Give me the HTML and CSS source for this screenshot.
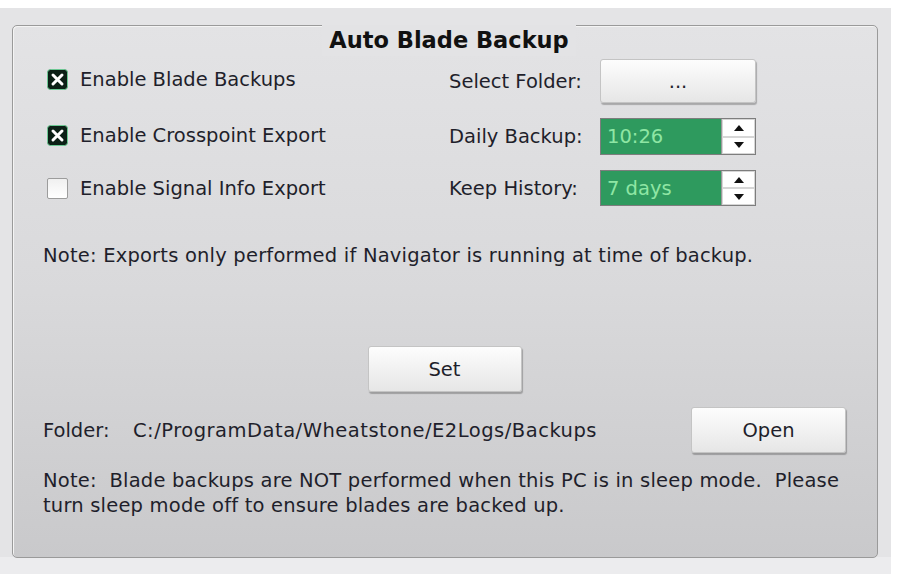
FILE: index.html
```html
<!DOCTYPE html>
<html lang="en">
<head>
    <meta charset="UTF-8">
    <title>Auto Blade Backup</title>
    <link rel="stylesheet" href="styles.css">
</head>
<body>
    <div class="frame">
        <div class="panel">
            <h2 class="panel-title">Auto Blade Backup</h2>

            <div class="options">
                <label class="check">
                    <span class="box checked">
                        <svg width="21" height="21" viewBox="0 0 21 21"><rect x="0.5" y="0.5" width="20" height="20" rx="3" fill="#0c2016" stroke="#6cc893"/><path d="M6 6 L15 15 M15 6 L6 15" stroke="#fff" stroke-width="3" stroke-linecap="round"/></svg>
                    </span>
                    Enable Blade Backups
                </label>
                <span class="field-label">Select Folder:</span>
                <button class="btn">...</button>

                <label class="check">
                    <span class="box checked">
                        <svg width="21" height="21" viewBox="0 0 21 21"><rect x="0.5" y="0.5" width="20" height="20" rx="3" fill="#0c2016" stroke="#6cc893"/><path d="M6 6 L15 15 M15 6 L6 15" stroke="#fff" stroke-width="3" stroke-linecap="round"/></svg>
                    </span>
                    Enable Crosspoint Export
                </label>
                <span class="field-label">Daily Backup:</span>
                <div class="spin">
                    <span class="spin-value">10:26</span>
                    <span class="spin-btns">
                        <span class="arrow up"></span>
                        <span class="arrow down"></span>
                    </span>
                </div>

                <label class="check last">
                    <span class="box"></span>
                    Enable Signal Info Export
                </label>
                <span class="field-label">Keep History:</span>
                <div class="spin">
                    <span class="spin-value">7 days</span>
                    <span class="spin-btns">
                        <span class="arrow up"></span>
                        <span class="arrow down"></span>
                    </span>
                </div>
            </div>

            <p class="note">Note: Exports only performed if Navigator is running at time of backup.</p>

            <div class="set-row">
                <button class="btn">Set</button>
            </div>

            <div class="folder-row">
                <span class="folder-label">Folder:</span>
                <span class="folder-path">C:/ProgramData/Wheatstone/E2Logs/Backups</span>
                <button class="btn open">Open</button>
            </div>

            <p class="note sleep">Note:&nbsp; Blade backups are NOT performed when this PC is in sleep mode.&nbsp; Please<br>turn sleep mode off to ensure blades are backed up.</p>
        </div>
    </div>
</body>
</html>
```

FILE: styles.css
```css
body {
    margin: 0;
    background: #fff;
    font-family: 'DejaVu Sans', Verdana, sans-serif;
    font-size: 19.5px;
    color: #1f1f2b;
}

.frame {
    margin-top: 8px;
    width: 891px;
    height: 566px;
    box-sizing: border-box;
    padding: 17px 13px 0 12px;
    background: linear-gradient(to bottom, #e4e4e6 0%, #e4e4e6 97%, #ececee 97%);
}

.panel {
    height: 533px;
    box-sizing: border-box;
    border: 1px solid #9a9a9a;
    border-radius: 5px;
    padding: 0 31px 0 30px;
    background: linear-gradient(to bottom, #e3e3e5 0%, #d9d9db 50%, #c9c9cb 100%);
    box-shadow: inset 1px 1px 0 #f4f4f4;
}

.panel-title {
    width: 254px;
    margin: -1px 0 0 279px;
    text-align: center;
    font-size: 22.5px;
    font-weight: bold;
    line-height: 31px;
    color: #111;
    background: #e3e3e5;
}

.options {
    display: grid;
    grid-template-columns: 406px 151px 156px;
    grid-template-rows: 44px 37px 36px;
    row-gap: 15px;
    align-items: center;
    margin-top: 3px;
}

.check {
    display: flex;
    align-items: center;
    gap: 12px;
    margin-left: 4px;
    margin-top: -3px;
}

.check.last {
    margin-top: 1px;
}

.box {
    width: 21px;
    height: 21px;
    box-sizing: border-box;
    border: 1px solid #9c9c9c;
    border-radius: 2px;
    background: linear-gradient(to bottom, #f0f0f0, #ffffff);
}

.box.checked {
    border: none;
    background: none;
}

.box svg {
    display: block;
}

.btn {
    height: 46px;
    width: 155px;
    font-family: inherit;
    font-size: 19.5px;
    color: #1f1f2b;
    border: 1px solid #c4c4c4;
    border-radius: 3px;
    background: linear-gradient(to bottom, #fdfdfd, #e6e6e6);
    box-shadow: 1px 2px 1px rgba(0,0,0,0.25);
    cursor: pointer;
}

.options .btn {
    height: 44px;
    width: 156px;
}

.spin {
    display: flex;
    height: 100%;
    border: 1px solid #7d7d7d;
    box-sizing: border-box;
}

.spin-value {
    flex: 1;
    display: flex;
    align-items: center;
    padding-left: 6px;
    background: #2e9a5e;
    color: #8ee6a4;
}

.spin-btns {
    width: 33px;
    display: flex;
    flex-direction: column;
    background: #fff;
    border-left: 1px solid #999;
}

.arrow {
    flex: 1;
    display: flex;
    align-items: center;
    justify-content: center;
    border: 1px solid #d6d6d6;
}

.arrow::before {
    content: "";
    border-left: 5px solid transparent;
    border-right: 5px solid transparent;
}

.arrow.up::before {
    border-bottom: 6px solid #111;
}

.arrow.down::before {
    border-top: 6px solid #111;
}

.note {
    margin: 37px 0 0;
    line-height: 25px;
    letter-spacing: 0.2px;
}

.set-row {
    display: flex;
    justify-content: center;
    margin-top: 78px;
}

.set-row .btn {
    width: 154px;
}

.folder-row {
    display: flex;
    align-items: center;
    margin-top: 15px;
}

.folder-label {
    width: 90px;
}

.folder-path {
    letter-spacing: 0.5px;
}

.open {
    margin-left: auto;
}

.note.sleep {
    margin-top: 15px;
}
```
